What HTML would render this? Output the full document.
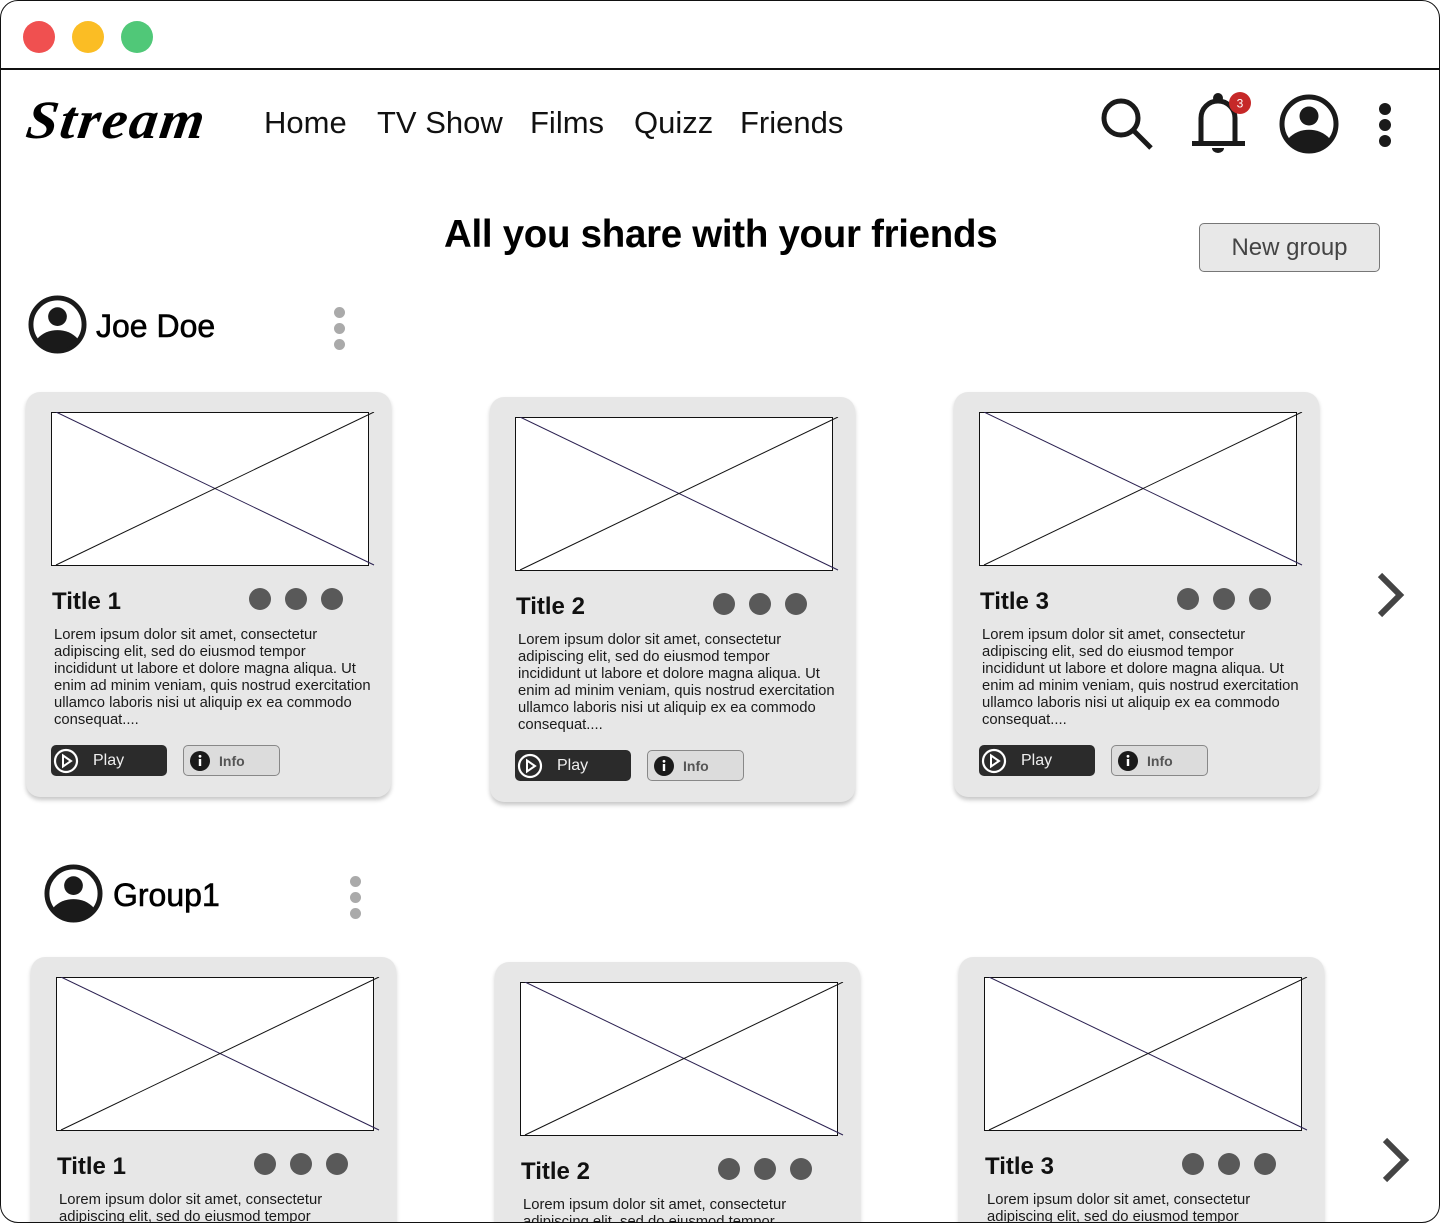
<!DOCTYPE html>
<html><head><meta charset="utf-8"><style>
*{margin:0;padding:0;box-sizing:border-box}
html,body{width:1440px;height:1224px;overflow:hidden}
body{background:#fff;font-family:"Liberation Sans",Arial,sans-serif;position:relative}
.frame{position:absolute;left:0;top:0;width:1440px;height:1223px;border:1.5px solid #111;border-radius:18px;overflow:hidden;background:#fff}
.bar{position:absolute;left:0;top:67px;width:1440px;height:1.5px;background:#111}
.tl{position:absolute;top:20px;width:32px;height:32px;border-radius:50%}
.abs{position:absolute}
.nav{position:absolute;top:104px;font-size:31px;color:#111}
.card{position:absolute;width:365px;height:405px;background:#e7e7e7;border-radius:14px;box-shadow:0 3px 4px rgba(0,0,0,.22)}
.card svg.img{position:absolute;left:25px;top:20px}
.card .t{position:absolute;left:26px;top:196px;font-size:24px;font-weight:bold;color:#111}
.card .d{position:absolute;top:196px;width:22px;height:22px;border-radius:50%;background:#595959}
.card .p{position:absolute;left:28px;top:235px;white-space:nowrap;font-size:14.8px;line-height:17px;color:#1a1a1a}
.play{position:absolute;left:25px;top:353px;width:116px;height:31px;background:#2b2b2b;border-radius:5px;color:#eee;font-size:16px}
.play span{position:absolute;left:42px;top:7px}
.info{position:absolute;left:157px;top:353px;width:97px;height:31px;background:#dcdcdc;border:1px solid #888;border-radius:5px;color:#555;font-size:14px;font-weight:bold}
.info span{position:absolute;left:35px;top:7px}
.vd{position:absolute;width:11px;height:11px;border-radius:50%;background:#aaa}
</style></head><body>
<div class="frame">
<div class="tl" style="left:22px;background:#f05050"></div>
<div class="tl" style="left:71px;background:#fbbd24"></div>
<div class="tl" style="left:120px;background:#50c878"></div>
<div class="bar"></div>

<div class="abs" style="left:26px;top:88px;font-family:'Liberation Serif',serif;font-style:italic;font-weight:bold;font-size:54px;letter-spacing:2px;color:#000;transform:skewX(-8deg) scaleX(1.05);transform-origin:left">Stream</div>
<div class="nav" style="left:263px">Home</div>
<div class="nav" style="left:376px">TV Show</div>
<div class="nav" style="left:529px">Films</div>
<div class="nav" style="left:633px">Quizz</div>
<div class="nav" style="left:739px">Friends</div>

<svg class="abs" style="left:1097px;top:94px" width="58" height="58" viewBox="0 0 58 58"><circle cx="23" cy="23" r="17" fill="none" stroke="#1a1a1a" stroke-width="5"/><line x1="35" y1="35" x2="53" y2="53" stroke="#1a1a1a" stroke-width="5"/></svg>
<svg class="abs" style="left:1187px;top:87px" width="66" height="68" viewBox="0 0 66 68"><circle cx="30" cy="10" r="5" fill="#1a1a1a"/><path d="M13 54 V30 A17 17 0 0 1 47 30 V54" fill="none" stroke="#1a1a1a" stroke-width="5"/><rect x="4" y="53" width="53" height="5" fill="#1a1a1a"/><path d="M24 60 A6 5 0 0 0 36 60Z" fill="#1a1a1a"/><circle cx="52" cy="15" r="11" fill="#c62828"/><text x="52" y="19.5" font-size="12" fill="#fff" text-anchor="middle" font-family="Liberation Sans">3</text></svg>
<svg class="abs" style="left:1278px;top:93px" width="60" height="60" viewBox="0 0 24 24"><circle cx="12" cy="12" r="10.8" fill="none" stroke="#1a1a1a" stroke-width="2"/><circle cx="12" cy="8.8" r="3.8" fill="#1a1a1a"/><path d="M3.6 18 C6 15.3 9 14.3 12 14.3 S18 15.3 20.4 18 A10.5 10.5 0 0 1 3.6 18Z" fill="#1a1a1a"/></svg>
<div class="abs" style="left:1378px;top:102px;width:12px;height:12px;border-radius:50%;background:#1a1a1a"></div>
<div class="abs" style="left:1378px;top:118px;width:12px;height:12px;border-radius:50%;background:#1a1a1a"></div>
<div class="abs" style="left:1378px;top:134px;width:12px;height:12px;border-radius:50%;background:#1a1a1a"></div>

<div class="abs" style="left:443px;top:212px;font-size:38.5px;font-weight:bold;letter-spacing:-0.3px;color:#000">All you share with your friends</div>
<div class="abs" style="left:1198px;top:222px;width:181px;height:49px;background:#e8e8e8;border:1px solid #777;border-radius:5px;font-size:24px;color:#444;text-align:center;line-height:47px">New group</div>

<svg class="abs" style="left:27px;top:294px" width="59" height="59" viewBox="0 0 24 24"><circle cx="12" cy="12" r="10.8" fill="none" stroke="#1a1a1a" stroke-width="2"/><circle cx="12" cy="8.8" r="3.8" fill="#1a1a1a"/><path d="M3.6 18 C6 15.3 9 14.3 12 14.3 S18 15.3 20.4 18 A10.5 10.5 0 0 1 3.6 18Z" fill="#1a1a1a"/></svg>
<div class="abs" style="left:95px;top:307px;font-size:32px;color:#000;-webkit-text-stroke:0.6px #000">Joe Doe</div>
<div class="vd" style="left:333px;top:306px"></div><div class="vd" style="left:333px;top:322px"></div><div class="vd" style="left:333px;top:338px"></div>

<svg class="abs" style="left:43px;top:863px" width="59" height="59" viewBox="0 0 24 24"><circle cx="12" cy="12" r="10.8" fill="none" stroke="#1a1a1a" stroke-width="2"/><circle cx="12" cy="8.8" r="3.8" fill="#1a1a1a"/><path d="M3.6 18 C6 15.3 9 14.3 12 14.3 S18 15.3 20.4 18 A10.5 10.5 0 0 1 3.6 18Z" fill="#1a1a1a"/></svg>
<div class="abs" style="left:112px;top:876px;font-size:32px;color:#000;-webkit-text-stroke:0.6px #000">Group1</div>
<div class="vd" style="left:349px;top:875px"></div><div class="vd" style="left:349px;top:891px"></div><div class="vd" style="left:349px;top:907px"></div>

<svg class="abs" style="left:1371px;top:569px" width="40" height="50" viewBox="0 0 40 50"><path d="M8 5 L28 25 L8 45" fill="none" stroke="#444" stroke-width="6"/></svg>
<svg class="abs" style="left:1376px;top:1134px" width="40" height="50" viewBox="0 0 40 50"><path d="M8 5 L28 25 L8 45" fill="none" stroke="#444" stroke-width="6"/></svg>

<div id="cards"></div>
</div>
<script>
var pos=[[25,391,1],[489,396,2],[953,391,3],[30,956,1],[494,961,2],[958,956,3]];
var h='';
pos.forEach(function(p){
h+='<div class="card" style="left:'+p[0]+'px;top:'+p[1]+'px">'+
'<svg class="img" width="325" height="157" viewBox="0 0 325 157"><rect x="0.5" y="0.5" width="317" height="153" fill="#fff" stroke="#111"/><line x1="5" y1="0" x2="323" y2="153" stroke="#2a2050"/><line x1="5" y1="153" x2="323" y2="0" stroke="#111"/></svg>'+
'<div class="t">Title '+p[2]+'</div>'+
'<div class="d" style="left:223px"></div><div class="d" style="left:259px"></div><div class="d" style="left:295px"></div>'+
'<div class="p">Lorem ipsum dolor sit amet, consectetur<br>adipiscing elit, sed do eiusmod tempor<br>incididunt ut labore et dolore magna aliqua. Ut<br>enim ad minim veniam, quis nostrud exercitation<br>ullamco laboris nisi ut aliquip ex ea commodo<br>consequat....</div>'+
'<div class="play"><svg style="position:absolute;left:2px;top:3px" width="26" height="26" viewBox="0 0 26 26"><circle cx="13" cy="13" r="11" fill="none" stroke="#fff" stroke-width="2.2"/><path d="M10 7.5 L18 13 L10 18.5Z" fill="none" stroke="#fff" stroke-width="2"/></svg><span>Play</span></div>'+
'<div class="info"><svg style="position:absolute;left:6px;top:5px" width="20" height="20" viewBox="0 0 20 20"><circle cx="10" cy="10" r="10" fill="#1a1a1a"/><rect x="8.8" y="8" width="2.4" height="7" fill="#fff"/><circle cx="10" cy="5.3" r="1.4" fill="#fff"/></svg><span>Info</span></div>'+
'</div>';
});
document.getElementById('cards').innerHTML=h;
</script>
</body></html>
